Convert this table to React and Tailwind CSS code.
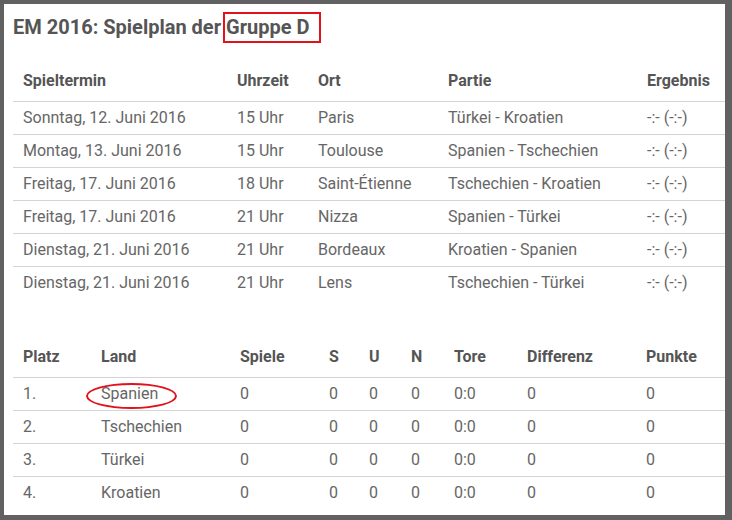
import React from 'react';

const spiele = [
  ['Sonntag, 12. Juni 2016', '15 Uhr', 'Paris', 'Türkei - Kroatien', '-:- (-:-)'],
  ['Montag, 13. Juni 2016', '15 Uhr', 'Toulouse', 'Spanien - Tschechien', '-:- (-:-)'],
  ['Freitag, 17. Juni 2016', '18 Uhr', 'Saint-Étienne', 'Tschechien - Kroatien', '-:- (-:-)'],
  ['Freitag, 17. Juni 2016', '21 Uhr', 'Nizza', 'Spanien - Türkei', '-:- (-:-)'],
  ['Dienstag, 21. Juni 2016', '21 Uhr', 'Bordeaux', 'Kroatien - Spanien', '-:- (-:-)'],
  ['Dienstag, 21. Juni 2016', '21 Uhr', 'Lens', 'Tschechien - Türkei', '-:- (-:-)'],
];

const tabelle = [
  ['1.', 'Spanien'],
  ['2.', 'Tschechien'],
  ['3.', 'Türkei'],
  ['4.', 'Kroatien'],
];

const spielCols = [
  ['Spieltermin', 'w-[214px]'],
  ['Uhrzeit', 'w-[81px]'],
  ['Ort', 'w-[130px]'],
  ['Partie', 'w-[199px]'],
  ['Ergebnis', 'w-[88px]'],
];

const tabCols = [
  ['Platz', 'w-[78px]'],
  ['Land', 'w-[139px]'],
  ['Spiele', 'w-[89px]'],
  ['S', 'w-[40px]'],
  ['U', 'w-[42px]'],
  ['N', 'w-[43px]'],
  ['Tore', 'w-[73px]'],
  ['Differenz', 'w-[119px]'],
  ['Punkte', 'w-[89px]'],
];

const HeaderRow = ({ cols }) => (
  <thead>
    <tr className="h-[42px] border-b border-[#d4d4d4]">
      {cols.map(([label, w]) => (
        <th key={label} className={`${w} pl-[10px] pt-[3px] text-left font-bold text-[16px] text-[#555] whitespace-nowrap`}>
          {label}
        </th>
      ))}
    </tr>
  </thead>
);

const App = () => {
  return (
    <div
      className="w-[732px] h-[520px] bg-[#616161] pl-[4px] pt-[4px] pr-[7px] pb-[5px]"
      style={{ fontFamily: 'Roboto, "Liberation Sans", sans-serif' }}
    >
      <div className="w-full h-full bg-white pl-[9px]">
        <h1 className="h-[55px] pt-[8px] text-[20px] font-bold text-[#555] leading-[30px] flex items-start">
          <span>EM 2016: Spielplan der</span>
          <span className="ml-[2px] pl-[1px] pr-[10px] border-2 border-[#e0121b] leading-[27px]">Gruppe D</span>
        </h1>

        <table className="table-fixed border-collapse w-[712px] text-[16px] text-[#666]">
          <HeaderRow cols={spielCols} />
          <tbody>
            {spiele.map((row, i) => (
              <tr
                key={i}
                className={`h-[33px] ${i < spiele.length - 1 ? 'border-b border-[#d4d4d4]' : ''}`}
              >
                {row.map((cell, j) => (
                  <td key={j} className="pl-[10px] whitespace-nowrap">{cell}</td>
                ))}
              </tr>
            ))}
          </tbody>
        </table>

        <div className="h-[36px]" />

        <table className="table-fixed border-collapse w-[712px] text-[16px] text-[#666]">
          <HeaderRow cols={tabCols} />
          <tbody>
            {tabelle.map(([platz, land], i) => (
              <tr
                key={land}
                className={`h-[33px] ${i < tabelle.length - 1 ? 'border-b border-[#d4d4d4]' : ''}`}
              >
                <td className="pl-[10px]">{platz}</td>
                <td className="pl-[10px] relative">
                  {land}
                  {i === 0 && (
                    <span className="absolute left-[-5px] top-[5px] w-[91px] h-[26px] rounded-[50%] border-2 border-[#e0121b]" />
                  )}
                </td>
                <td className="pl-[10px]">0</td>
                <td className="pl-[10px]">0</td>
                <td className="pl-[10px]">0</td>
                <td className="pl-[10px]">0</td>
                <td className="pl-[10px]">0:0</td>
                <td className="pl-[10px]">0</td>
                <td className="pl-[10px]">0</td>
              </tr>
            ))}
          </tbody>
        </table>
      </div>
    </div>
  );
};

export default App;
